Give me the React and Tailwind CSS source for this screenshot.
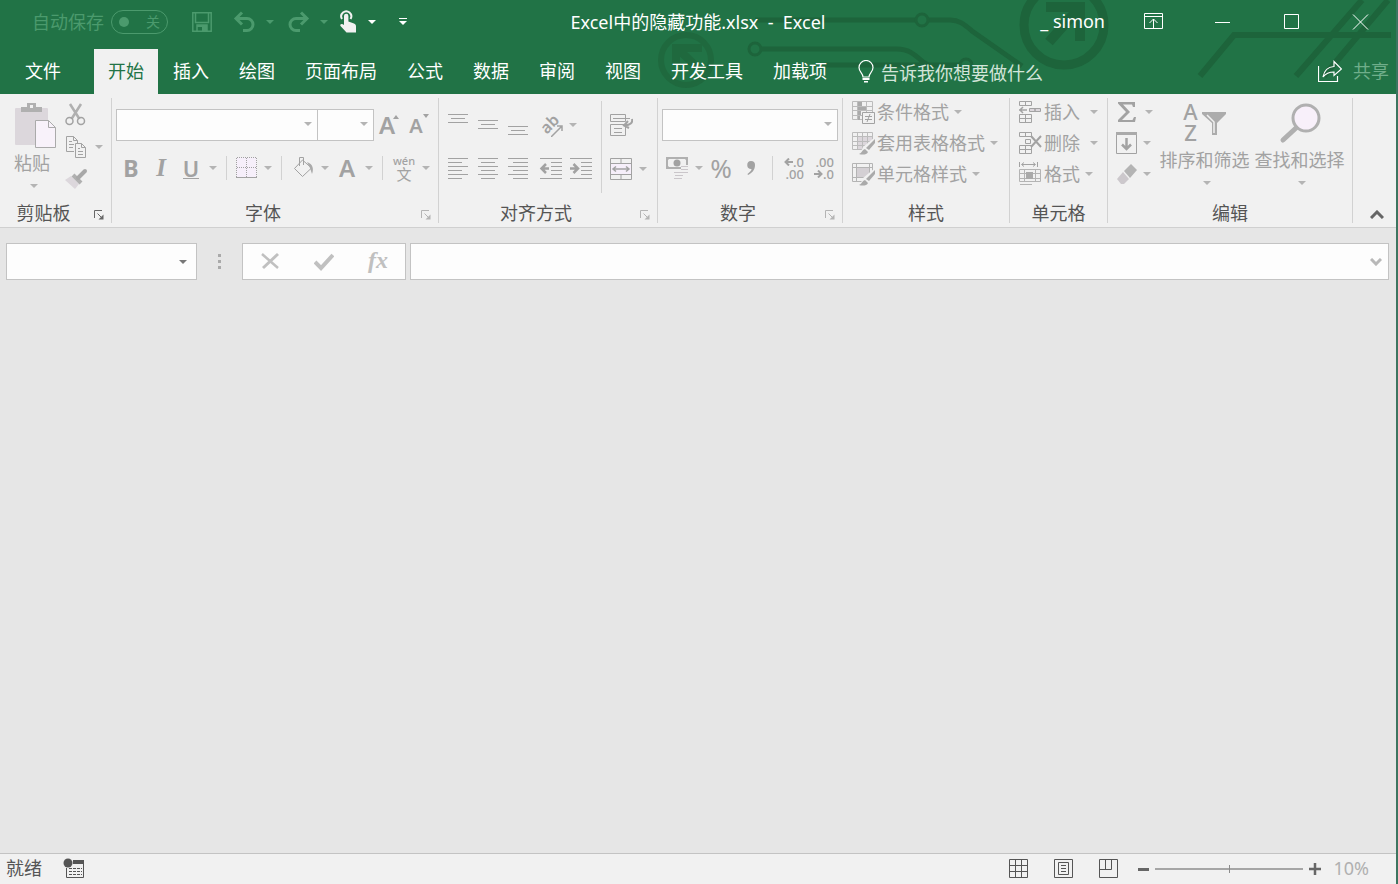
import { useState } from "react";

const tabs = ["开始", "插入", "绘图", "页面布局", "公式", "数据", "审阅", "视图", "开发工具", "加载项"];

const Caret = ({ className = "text-[#b4b4b4]" }) => (
  <svg width="8" height="4" viewBox="0 0 8 4" className={className} aria-hidden="true">
    <path d="M0 0h8L4 4z" fill="currentColor" />
  </svg>
);

const Drop = ({ label }) => (
  <button aria-label={label} className="flex h-7 w-[14px] items-center justify-center">
    <Caret />
  </button>
);

const Tool = ({ label, children }) => (
  <button aria-label={label} className="flex h-7 w-[30px] items-center justify-center">
    {children}
  </button>
);

const Sep = () => <div className="mx-[6px] h-6 w-px bg-[#d2d2d2]" />;

// line icon used all over the ribbon, 24x24 or 20x20
const Icon = ({ children, size = 24 }) => (
  <svg
    width={size}
    height={size}
    viewBox={size === 24 ? "0 0 24 24" : "0 0 20 20"}
    fill="none"
    stroke="currentColor"
    strokeWidth="1"
    aria-hidden="true"
    className="shrink-0"
  >
    {children}
  </svg>
);

const Group = ({ title, launcher, dark, className, children }) => (
  <section aria-label={title} className={`flex shrink-0 flex-col border-r border-[#d2d2d2] ${className}`}>
    <div className="flex flex-1">{children}</div>
    <div className="flex h-5 items-center text-[#555]">
      <span className="flex-1 text-center leading-5">{title}</span>
      {launcher && (
        <button
          aria-label={`${title}设置`}
          className={`flex w-6 justify-center pt-1 ${dark ? "text-[#666]" : "text-[#b4b4b4]"}`}
        >
          <svg width="10" height="10" viewBox="0 0 10 10" fill="none" stroke="currentColor">
            <path d="M.5 8V.5H8M3.500 3.500l4 4" />
            <path d="M9.500 4.500v5h-5z" fill="currentColor" stroke="none" />
          </svg>
        </button>
      )}
    </div>
  </section>
);

const Lines = ({ rows }) => (
  <svg width="20" height="24" viewBox="0 0 20 24" stroke="#a2a2a2" aria-hidden="true">
    {rows.map(([x1, x2, y]) => (
      <path key={y} d={`M${x1} ${y}.5H${x2}`} />
    ))}
  </svg>
);

const Combo = ({ label, className }) => (
  <div className={`relative h-8 ${className}`}>
    <select aria-label={label} className="h-full w-full appearance-none border border-[#c3c3c3] bg-[#fdfdfd] px-2 outline-none" />
    <span className="pointer-events-none absolute top-[13px] right-[6px] flex">
      <Caret />
    </span>
  </div>
);

const Circuit = () => (
  <svg
    width="756"
    height="94"
    viewBox="640 0 756 94"
    fill="none"
    stroke="#1d643b"
    strokeWidth="6"
    className="pointer-events-none absolute top-0 right-0"
    aria-hidden="true"
  >
    <circle cx="686" cy="60" r="25" stroke="#1f693e" />
    <path d="M676 64V48h26M680 51l17 16" stroke="#1f693e" strokeWidth="8" />
    <path d="M755 20h161M928 20h22c10 0 15 5 22 11l50 35" strokeWidth="5" />
    <circle cx="922" cy="20" r="6" strokeWidth="3" />
    <circle cx="755" cy="49" r="6" strokeWidth="3" />
    <path d="M761 49h136c12 0 18 6 26 13l10 6M820 65h140" strokeWidth="5" />
    <circle cx="966" cy="65" r="6" strokeWidth="3" />
    <circle cx="1064" cy="25" r="40" strokeWidth="9" />
    <path d="M1046 7h34v34M1079 8l-30 34" strokeWidth="10" />
    <path d="M1200 76l34-41h157M1296 76L1362 0M1324 76L1388 0" />
  </svg>
);

const TitleBar = () => (
  <div className="relative grid h-11 grid-cols-[1fr_auto_1fr] items-center">
    <div className="flex items-center pl-8 text-[#4b9a6d]">
      <label htmlFor="autosave">自动保存</label>
      <button
        id="autosave"
        role="switch"
        aria-checked="false"
        className="ml-[7px] flex h-6 w-[57px] items-center justify-between rounded-full border border-current px-[7px] text-sm"
      >
        <span className="h-[10px] w-[10px] rounded-full bg-current" />
        关
      </button>
      <button aria-label="保存" className="ml-6">
        <Icon size={20}>
          <path d="M.8 .8h18.400v18.400H.8z" strokeWidth="1.500" />
          <path d="M3.500 1v9.500h13V1M5 19v-6h10v6" strokeWidth="1.500" />
          <path d="M5 13h10v2H5zM10 15h5v4h-5z" fill="currentColor" stroke="none" />
        </Icon>
      </button>
      <button aria-label="撤消" className="ml-[21px]">
        <Icon>
          <path d="M3 8.500h11a5.500 5.500 0 0 1 0 12h-4M9 2.500L3 8.500l6 6" strokeWidth="3" />
        </Icon>
      </button>
      <button aria-label="撤消列表" className="ml-[9px]">
        <Caret className="text-[#4b9a6d]" />
      </button>
      <button aria-label="恢复" className="ml-3">
        <Icon>
          <path d="M21 8.500H10a5.500 5.500 0 0 0 0 12h4M15 2.500l6 6-6 6" strokeWidth="3" />
        </Icon>
      </button>
      <button aria-label="恢复列表" className="ml-[10px]">
        <Caret className="text-[#4b9a6d]" />
      </button>
      <button aria-label="触摸模式" className="ml-[9px] text-[#f1f1f1]">
        <Icon>
          <path d="M5 9a5 5 0 1 1 8.500 0" strokeWidth="2" />
          <path
            d="M7 6a2.200 2.200 0 0 1 4.400 0v5.500l5.600 2c2 .7 2 2 2 3.500v5.500H9.500l-6-6.500c-1-2 1.500-3 3.500-1z"
            fill="currentColor"
            stroke="none"
          />
        </Icon>
      </button>
      <button aria-label="触摸模式列表" className="ml-[7px]">
        <Caret className="text-white" />
      </button>
      <button aria-label="自定义快速访问工具栏" className="ml-[23px] text-white">
        <svg width="8" height="8" viewBox="0 0 8 8" fill="currentColor">
          <path d="M0 0h8v1H0zM0 3h8L4 7z" />
        </svg>
      </button>
    </div>
    <h1 className="whitespace-pre text-white">Excel中的隐藏功能.xlsx  -  Excel</h1>
    <div className="flex items-center justify-end pr-px pb-[3px] text-white">
      <span className="mr-[14px]">_ simon</span>
      <button aria-label="功能区显示选项" className="flex w-[69px] justify-center">
        <Icon size={20}>
          <path d="M.5 2.500h18v15H.5zM.5 5.500h18M9.500 17V8M5.500 12l4-4 4 4" />
        </Icon>
      </button>
      <button aria-label="最小化" className="flex w-[69px] justify-center">
        <Icon size={20}>
          <path d="M2 11.500h15" />
        </Icon>
      </button>
      <button aria-label="最大化" className="flex w-[69px] justify-center">
        <Icon size={20}>
          <path d="M2.500 3.500h14v14h-14z" />
        </Icon>
      </button>
      <button aria-label="关闭" className="flex w-[69px] justify-center">
        <Icon size={20}>
          <path d="M2 3.500l15 15M17 3.500l-15 15" />
        </Icon>
      </button>
    </div>
  </div>
);

const TabBar = ({ active, setActive }) => (
  <nav className="relative mt-[5px] flex h-[45px] items-stretch text-white">
    <button className="mr-2 w-[86px] pb-0.5">文件</button>
    {tabs.map((tab) => (
      <button
        key={tab}
        onClick={() => setActive(tab)}
        className={tab === active ? "bg-[#f1f1f1] px-[14px] pb-0.5 text-[#217346]" : "px-[15px] pb-0.5"}
      >
        {tab}
      </button>
    ))}
    <label className="ml-4 flex flex-1 items-center">
      <svg width="16" height="24" viewBox="0 0 16 24" fill="none" stroke="currentColor" aria-hidden="true">
        <path d="M5 17c0-4-4-5-4-9.500a7 7 0 0 1 14 0C15 12 11 13 11 17z" strokeWidth="1.200" />
        <path d="M4.500 18h7v2h-7zM6 21h4v1.500H6z" fill="currentColor" stroke="none" />
      </svg>
      <input
        aria-label="告诉我你想要做什么"
        placeholder="告诉我你想要做什么"
        className="ml-[7px] w-48 bg-transparent pt-0.5 outline-none placeholder:text-[#d3e5da]"
      />
    </label>
    <button className="flex items-center gap-[11px] pr-[7px] pb-0.5 text-[#6fae8a]">
      <span className="text-white">
        <Icon>
          <path d="M.5 7v15.500h19V17" strokeWidth="1.200" />
          <path d="M5 18c1-6 4-10 11-10.500V2.500l7.500 7.500-7.500 6.500V13c-5 0-8 1-11 5z" strokeWidth="1.200" />
        </Icon>
      </span>
      共享
    </button>
  </nav>
);

const Clipboard = () => (
  <Group title="剪贴板" launcher dark className="w-28">
    <button className="ml-3 flex w-[44px] flex-col items-center pt-1">
      <svg width="44" height="46" viewBox="0 0 44 46" aria-hidden="true">
        <rect x="3" y="6" width="33" height="37" rx="1" fill="#dcd7dc" />
        <path d="M9 5h6V1h9v4h6v5H9zM18 3v3h3V3z" fill="#b0b0b0" fillRule="evenodd" />
        <path d="M23.500 18.500h13l7 7v20h-20z" fill="#f8f2fa" stroke="#aaa" />
        <path d="M36.500 18.500v7h7" fill="none" stroke="#aaa" />
      </svg>
      <span className="-ml-1 leading-[30px]">粘贴</span>
      <span className="flex pt-[6px]">
        <Caret />
      </span>
    </button>
    <div className="ml-2 flex flex-col gap-2 pt-[5px]">
      <button aria-label="剪切">
        <Icon>
          <path d="M6 1l9.500 15M17 1L7.500 16" stroke="#b0b0b0" strokeWidth="2.500" />
          <circle cx="5.500" cy="18" r="3.500" strokeWidth="1.500" />
          <circle cx="17" cy="18" r="3.500" strokeWidth="1.500" />
        </Icon>
      </button>
      <div className="flex h-6 items-center">
        <button aria-label="复制">
          <Icon>
            <path d="M10 16.500H2.500v-15h7l4 4V8" />
            <path d="M9.500 1.500v4h4M5 6.500h3M5 9.500h5M5 12.500h4" />
            <path d="M11.500 8.500h6l4 4v10h-10z" />
            <path d="M17.500 8.500v4h4M14 13.500h2M14 16.500h5M14 19.500h5" />
          </Icon>
        </button>
        <span className="ml-1">
          <Drop label="复制选项" />
        </span>
      </div>
      <button aria-label="格式刷">
        <Icon>
          <path d="M1 13l6-4 8 8-4 5z" fill="#dcd7dc" stroke="none" />
          <path d="M9 8l8 8" stroke="#b0b0b0" strokeWidth="4" />
          <path d="M14 11l7-7" stroke="#a8a8a8" strokeWidth="4" strokeLinecap="round" />
        </Icon>
      </button>
    </div>
  </Group>
);

const FontGroup = () => (
  <Group title="字体" launcher className="w-[327px]">
    <div className="pt-[11px] pl-1">
      <div className="flex items-center">
        <Combo label="字体" className="w-[202px]" />
        <Combo label="字号" className="-ml-px w-[57px]" />
        <Tool label="增大字号">
          <span className="flex">
            <span className="text-[24px] leading-7 font-semibold">A</span>
            <svg width="6" height="4" viewBox="0 0 6 4" className="-ml-0.5 mt-1">
              <path d="M0 4h6L3 0z" fill="currentColor" />
            </svg>
          </span>
        </Tool>
        <Tool label="减小字号">
          <span className="flex">
            <span className="pt-0.5 text-[20px] leading-7 font-semibold">A</span>
            <svg width="6" height="4" viewBox="0 0 6 4" className="mt-1">
              <path d="M0 0h6L3 4z" fill="currentColor" />
            </svg>
          </span>
        </Tool>
      </div>
      <div className="mt-[13px] flex items-center">
        <Tool label="加粗">
          <b className="text-[23px] leading-7 font-bold">B</b>
        </Tool>
        <Tool label="倾斜">
          <i className="font-['Liberation_Serif'] text-[25px] leading-7 font-bold">I</i>
        </Tool>
        <Tool label="下划线">
          <span className="border-b border-current text-[22px] leading-5 font-semibold">U</span>
        </Tool>
        <Drop label="下划线选项" />
        <Sep />
        <button aria-label="边框" className="flex h-7 w-7 items-center justify-center">
          <Icon>
            <path d="M1.500 1.500h20v20h-20z" fill="#f6effa" stroke="none" />
            <path d="M1.500 21V1.500h20V21M11.500 2v19M2 11.500h19" strokeDasharray="1 1" />
            <path d="M1 21.500h21" />
          </Icon>
        </button>
        <Drop label="边框选项" />
        <Sep />
        <Tool label="填充颜色">
          <Icon>
            <path d="M3.500 12.500L11.500 4l9 8-9 8.500zM8.500 10V1.500h4V9" />
            <path d="M16 6c6 2 7 7 5 12l-2-6z" fill="#aaa" stroke="none" />
          </Icon>
        </Tool>
        <Drop label="填充颜色选项" />
        <Tool label="字体颜色">
          <span className="text-[24px] leading-7 font-semibold">A</span>
        </Tool>
        <Drop label="字体颜色选项" />
        <Sep />
        <Tool label="拼音">
          <span className="flex flex-col items-center">
            <span className="text-[11px] leading-3 font-medium">wén</span>
            <span className="text-[15px] leading-[14px]">文</span>
          </span>
        </Tool>
        <Drop label="拼音选项" />
      </div>
    </div>
  </Group>
);

const AlignGroup = () => (
  <Group title="对齐方式" launcher className="w-[219px]">
    <div className="w-[162px] pt-[13px] pl-1">
      <div className="flex items-center">
        <Tool label="顶端对齐"><Lines rows={[[0, 20, 1], [3, 17, 5], [0, 20, 9]]} /></Tool>
        <Tool label="垂直居中"><Lines rows={[[0, 20, 7], [3, 17, 11], [0, 20, 15]]} /></Tool>
        <Tool label="底端对齐"><Lines rows={[[0, 20, 13], [3, 17, 17], [0, 20, 21]]} /></Tool>
        <span className="ml-[3px]">
          <Tool label="方向">
            <span className="relative flex h-6 w-6 items-center justify-center">
              <span className="-rotate-45 pb-1 text-[16px] leading-5 font-semibold">ab</span>
              <svg width="12" height="12" viewBox="0 0 12 12" className="absolute right-0 bottom-0" fill="none" stroke="currentColor" strokeWidth="1.500">
                <path d="M0 12L11 1M11 6V1H6" />
              </svg>
            </span>
          </Tool>
        </span>
        <Drop label="方向选项" />
      </div>
      <div className="mt-4 flex items-center">
        <Tool label="左对齐"><Lines rows={[[0, 20, 1], [0, 14, 5], [0, 20, 9], [0, 14, 13], [0, 20, 17], [0, 14, 21]]} /></Tool>
        <Tool label="居中"><Lines rows={[[0, 20, 1], [3, 17, 5], [0, 20, 9], [3, 17, 13], [0, 20, 17], [3, 17, 21]]} /></Tool>
        <Tool label="右对齐"><Lines rows={[[0, 20, 1], [5, 20, 5], [0, 20, 9], [5, 20, 13], [0, 20, 17], [5, 20, 21]]} /></Tool>
        <span className="ml-[3px] flex">
          <Tool label="减少缩进量">
            <Icon>
              <path d="M1 1.500h22M12 5.500h11M12 9.500h11M12 13.500h11M12 17.500h11M1 21.500h22" />
              <path d="M10 11.500H3M7 7l-4.500 4.500L7 16" strokeWidth="2.500" />
            </Icon>
          </Tool>
          <Tool label="增加缩进量">
            <Icon>
              <path d="M1 1.500h22M12 5.500h11M12 9.500h11M12 13.500h11M12 17.500h11M1 21.500h22" />
              <path d="M1 11.500h7M4.500 7L9 11.500 4.500 16" strokeWidth="2.500" />
            </Icon>
          </Tool>
        </span>
      </div>
    </div>
    <div className="mt-[3px] h-[92px] w-px bg-[#d2d2d2]" />
    <div className="pt-[13px] pl-1">
      <Tool label="自动换行">
        <Icon>
          <path d="M1.500 1.500h15v7h-15zM1.500 11.500h15v11h-15zM4 5.500h17M5 15.500h8M5 19.500h8" />
          <path d="M23 6c1 4-2 6-7 6.500M19 8l-4 4.500 5 2.500" strokeWidth="2" />
        </Icon>
      </Tool>
      <div className="mt-4 flex items-center">
        <Tool label="合并后居中">
          <Icon>
            <path d="M2 7h20v10H2z" fill="#f6effa" stroke="none" />
            <path d="M1.500 1.500h21v21h-21zM1.500 6.500h21M1.500 17.500h21M12 1.500v5M12 17.500v5" />
            <path d="M4 12h16M7 9.500L4 12l3 2.500M17 9.500l3 2.500-3 2.500" strokeWidth="1.500" />
          </Icon>
        </Tool>
        <Drop label="合并选项" />
      </div>
    </div>
  </Group>
);

const NumberGroup = () => (
  <Group title="数字" launcher className="w-[185px]">
    <div className="pt-[11px] pl-1">
      <Combo label="数字格式" className="w-[176px]" />
      <div className="mt-[13px] flex items-center">
        <Tool label="会计数字格式">
          <Icon>
            <path d="M1 1h22v12H1zM4 3a2 2 0 0 1-1 1v6a2 2 0 0 1 1 1h16a2 2 0 0 1 1-1V4a2 2 0 0 1-1-1z" fill="#b0b0b0" fillRule="evenodd" stroke="none" />
            <circle cx="12" cy="7" r="3.500" fill="currentColor" stroke="none" />
            <path d="M16 9h8v8h-8zM9 15h9v8H9z" fill="#f1f1f1" stroke="none" />
            <path d="M16 10.500h7M16 13.500h7M16 16.500h7M9 16.500h8M10 19.500h8M9 22.500h8" stroke="#cac6ca" />
          </Icon>
        </Tool>
        <Drop label="会计数字格式选项" />
        <Tool label="百分比样式"><span className="text-[26px] leading-7">%</span></Tool>
        <Tool label="千位分隔样式">
          <svg width="10" height="16" viewBox="0 0 10 16" fill="currentColor">
            <path d="M5 1a4 4 0 0 1 4 4c0 5-3 8-7 10l-.5-1C4 12 5.500 10.500 5.500 9A4 4 0 1 1 5 1z" />
          </svg>
        </Tool>
        <Sep />
        <Tool label="增加小数位数">
          <span className="flex flex-col items-end text-[13px] leading-3 font-medium">
            <span className="flex items-center">
              <svg width="9" height="8" viewBox="0 0 9 8" fill="none" stroke="currentColor" strokeWidth="2"><path d="M9 4H2M5 .5L1.500 4 5 7.500" /></svg>
              .0
            </span>
            <span>.00</span>
          </span>
        </Tool>
        <Tool label="减少小数位数">
          <span className="flex flex-col items-end text-[13px] leading-3 font-medium">
            <span>.00</span>
            <span className="flex items-center">
              <svg width="9" height="8" viewBox="0 0 9 8" fill="none" stroke="currentColor" strokeWidth="2"><path d="M0 4h7M4 .5L7.500 4 4 7.500" /></svg>
              .0
            </span>
          </span>
        </Tool>
      </div>
    </div>
  </Group>
);

const MenuRow = ({ label, icon, children }) => (
  <button className="flex h-[31px] items-center">
    <Icon>{icon}</Icon>
    <span className="ml-[2px]">{label}</span>
    {children || (
      <span className="ml-[5px]">
        <Caret />
      </span>
    )}
  </button>
);

const Brush = () => (
  <>
    <path d="M12 16l12-10v17H9z" fill="#f1f1f1" stroke="none" />
    <path d="M8 23c3-1 3-4 6-5l3 3c-1 3-6 3-9 2z" fill="#aaa" stroke="none" />
    <path d="M15 17l9-9v4l-6 7z" fill="#aaa" stroke="none" />
  </>
);

const StyleGroup = () => (
  <Group title="样式" className="w-[167px]">
    <div className="-mt-0.5 pl-2">
      <MenuRow
        label="条件格式"
        icon={
          <>
            <path d="M1.500 1.500h20v18h-20zM1.500 6.500h20M1.500 10.500h20M1.500 15.500h20M6.500 1.500v18M15.500 1.500v18" stroke="#bcbcbc" />
            <path d="M7 2h4v4H7zM7 7h8v3H7zM7 11h3v4H7zM7 16h2v4H7z" fill="#aaa" stroke="none" />
            <path d="M11.500 12.500h12v11h-12z" fill="#f1f1f1" />
            <path d="M14 16.500h7M14 19.500h7M19 14l-3 8" />
          </>
        }
      />
      <MenuRow
        label="套用表格格式"
        icon={
          <>
            <path d="M7 6h14v13H7z" fill="#dcd7dc" stroke="none" />
            <path d="M1.500 1.500h20v17h-20zM1.500 5.500h20M1.500 10.500h20M1.500 14.500h20M6.500 1.500v17M11.500 1.500v17M16.500 1.500v17" stroke="#bcbcbc" />
            <Brush />
          </>
        }
      />
      <MenuRow
        label="单元格样式"
        icon={
          <>
            <path d="M5 6h13v10H5z" fill="#d4d0d4" stroke="none" />
            <path d="M1.500 1.500h20v18h-20zM1.500 5.500h20M1.500 15.500h20M5.500 1.500v18M18.500 1.500v18" stroke="#b4b4b4" />
            <Brush />
          </>
        }
      />
    </div>
  </Group>
);

const CellGroup = () => (
  <Group title="单元格" className="w-[98px]">
    <div className="-mt-0.5 pl-2">
      <MenuRow
        label="插入"
        icon={
          <>
            <path d="M1.500 1.500h12v4h-12zM7.500 1.500v4M1.500 14.500h12v8h-12zM1.500 18.500h12M7.500 14.500v8" />
            <path d="M11.500 8.500h11v3h-11z" fill="#dcd7dc" />
            <path d="M17 8v4M1 10h8M5 7l-3 3 3 3" strokeWidth="1.500" />
          </>
        }
      >
        <span className="ml-[10px]"><Caret /></span>
      </MenuRow>
      <MenuRow
        label="删除"
        icon={
          <>
            <path d="M1.500 1.500h12v4h-12zM7.500 1.500v4M1.500 14.500h12v8h-12zM1.500 18.500h12M7.500 14.500v8M7.500 8.500h5v4h-5z" />
            <path d="M13 5l10 11M23 5L13 16" strokeWidth="2" />
          </>
        }
      >
        <span className="ml-[10px]"><Caret /></span>
      </MenuRow>
      <MenuRow
        label="格式"
        icon={
          <>
            <path d="M1.500 0v5M19.500 0v5M4 2.500h13M6 .5l-2.500 2L6 4.500M15 .5l2.500 2-2.500 2" />
            <path d="M1.500 7.500h21v12h-21zM1.500 11.500h21M1.500 16.500h21M6.500 7.500v12M17.500 7.500v12M2 22.500h12" stroke="#b4b4b4" />
            <path d="M8 10h7v7H8z" fill="#aaa" stroke="none" />
          </>
        }
      />
    </div>
  </Group>
);

const EditGroup = () => (
  <Group title="编辑" className="w-[245px]">
    <div className="-mt-0.5 pl-[6px]">
      <button aria-label="自动求和" className="flex h-[31px] items-center gap-[7px]">
        <Icon>
          <path d="M4 2h17v5h-2l-1-2.500H9l7 7.500-8 8h10.500l1.500-3h2L21 22H4v-2l8-8-8-8.500z" fill="currentColor" stroke="none" />
        </Icon>
        <Caret />
      </button>
      <button aria-label="填充" className="flex h-[31px] items-center gap-[5px]">
        <Icon>
          <path d="M2.500 3v19.500h20V3" />
          <path d="M2 1h21v3H2z" fill="#aaa" stroke="none" />
          <path d="M12.500 7v11M8 13.500l4.500 4.500 4.500-4.500" strokeWidth="2.500" />
        </Icon>
        <Caret />
      </button>
      <button aria-label="清除" className="flex h-[31px] items-center gap-[5px]">
        <Icon>
          <path d="M10 9l7-7 6 6-7 8z" fill="#b4b4b4" stroke="none" />
          <path d="M9 10l6 7-5 5H7l-4-5z" fill="#ccc8cc" stroke="none" />
        </Icon>
        <Caret />
      </button>
    </div>
    <button className="ml-1 flex w-[95px] flex-col items-center pt-[3px]">
      <span className="flex h-11 w-[44px]" aria-hidden="true">
        <span className="flex w-4 flex-col items-center text-[22px] leading-[21px] font-medium">
          <span>A</span>
          <span>Z</span>
        </span>
        <svg width="26" height="44" viewBox="0 0 26 44" fill="#acacac" className="ml-0.5">
          <path d="M1 11h24v2l-9 9v12h-5V22L1 13z" />
          <path d="M6 14l7 7v11" fill="none" stroke="#f1f1f1" strokeWidth="1.500" />
        </svg>
      </span>
      <span className="leading-[30px]">排序和筛选</span>
      <span className="flex pt-[6px] pl-1"><Caret /></span>
    </button>
    <button className="flex w-[95px] flex-col items-center pt-[3px]">
      <svg width="44" height="44" viewBox="0 0 44 44" aria-hidden="true" fill="none" stroke="#b0b0b0">
        <circle cx="28" cy="17" r="13" fill="#f8f0fa" strokeWidth="3" />
        <path d="M18 27L5 39" strokeWidth="5" strokeLinecap="round" />
      </svg>
      <span className="leading-[30px]">查找和选择</span>
      <span className="flex pt-[6px] pl-1"><Caret /></span>
    </button>
  </Group>
);

const FormulaBar = () => (
  <div className="flex h-[52px] items-end pr-[7px] pl-[6px]">
    <div className="relative h-[37px] w-[191px]">
      <input aria-label="名称框" className="h-full w-full border border-[#c3c3c3] bg-[#fdfdfd] px-2 outline-none" />
      <button aria-label="名称列表" className="absolute top-0 right-[10px] flex h-full items-center">
        <Caret className="text-[#777]" />
      </button>
    </div>
    <div className="flex h-[37px] w-[45px] flex-col items-center justify-center gap-[3px]">
      <span className="h-[3px] w-[3px] bg-[#aaa]" />
      <span className="h-[3px] w-[3px] bg-[#aaa]" />
      <span className="h-[3px] w-[3px] bg-[#aaa]" />
    </div>
    <div className="flex h-[37px] w-[164px] items-center justify-around border border-[#c3c3c3] bg-[#fdfdfd] text-[#c0c0c0]">
      <button aria-label="取消">
        <Icon size={20}>
          <path d="M2 2l16 14" strokeWidth="2.500" />
          <path d="M18 2L3 16" strokeWidth="3" />
        </Icon>
      </button>
      <button aria-label="输入">
        <Icon size={20}>
          <path d="M1 10l6 6L19 3" strokeWidth="4" />
        </Icon>
      </button>
      <button aria-label="插入函数" className="pb-1 font-['Liberation_Serif'] text-[24px] leading-7 font-bold italic">
        fx
      </button>
    </div>
    <div className="relative ml-1 h-[37px] flex-1">
      <input aria-label="编辑栏" className="h-full w-full border border-[#c3c3c3] bg-[#fdfdfd] px-2 outline-none" />
      <button aria-label="展开编辑栏" className="absolute top-0 right-[7px] flex h-full items-center text-[#b8b8b8]">
        <svg width="12" height="8" viewBox="0 0 12 8" fill="none" stroke="currentColor" strokeWidth="3">
          <path d="M1 1l5 5 5-5" />
        </svg>
      </button>
    </div>
  </div>
);

const StatusBar = () => (
  <footer className="flex h-[31px] items-center border-t border-[#c3c3c3] bg-[#f1f1f1] pr-[27px] pl-[6px] text-[#555]">
    <span className="pb-0.5">就绪</span>
    <button aria-label="宏录制" className="ml-[21px]">
      <Icon>
        <path d="M3.500 11v9.500h17V4" />
        <path d="M10 3h11v4H10z" fill="currentColor" stroke="none" />
        <circle cx="5" cy="6" r="4.500" fill="currentColor" stroke="none" />
        <path d="M6 11.500h13M6 14.500h13M6 17.500h13" strokeDasharray="3 1" />
      </Icon>
    </button>
    <div className="ml-auto flex items-center">
      <div className="mr-[19px] flex gap-[25px]">
        <button aria-label="普通">
          <Icon size={20}>
            <path d="M.5 .5h18v18H.5zM6.500 .5v18M12.500 .5v18M.5 6.500h18M.5 12.500h18" />
          </Icon>
        </button>
        <button aria-label="页面布局">
          <Icon size={20}>
            <path d="M.5 .5h18v18H.5zM4.500 3.500h10v12h-10zM7 6.500h5M7 9.500h5M7 12.500h5" />
          </Icon>
        </button>
        <button aria-label="分页预览">
          <Icon size={20}>
            <path d="M.5 .5h18v18H.5zM.5 10.500h12V.5M6.500 .5v10" />
          </Icon>
        </button>
      </div>
      <button aria-label="缩小" className="flex h-5 w-[11px] items-center">
        <span className="h-[3px] w-full bg-[#666]" />
      </button>
      <div className="relative mx-[6px] flex h-5 w-[148px] items-center">
        <span className="absolute left-1/2 h-2 w-px bg-[#8c8c8c]" />
        <input
          type="range"
          min="10"
          max="400"
          defaultValue="10"
          aria-label="缩放"
          className="h-[2px] w-full appearance-none bg-[#a6a6a6] [&::-webkit-slider-thumb]:appearance-none"
        />
      </div>
      <button aria-label="放大">
        <svg width="12" height="12" viewBox="0 0 12 12" stroke="#666" strokeWidth="2.500">
          <path d="M6 0v12M0 6h12" />
        </svg>
      </button>
      <span className="ml-3 pb-0.5 text-[#b0b0b0]">10%</span>
    </div>
  </footer>
);

const App = () => {
  const [active, setActive] = useState("开始");

  return (
    <div className="flex h-screen flex-col border-r-2 border-[#3d7560] bg-[#e6e6e6] font-['Noto_Sans','Noto_Sans_CJK_SC',sans-serif] text-[18px] leading-6">
      <header className="relative bg-[#217346]">
        <Circuit />
        <TitleBar />
        <TabBar active={active} setActive={setActive} />
      </header>
      <div className="flex h-[134px] border-b border-[#d0d0d0] bg-[#f1f1f1] py-1 text-[#a2a2a2]">
        <Clipboard />
        <FontGroup />
        <AlignGroup />
        <NumberGroup />
        <StyleGroup />
        <CellGroup />
        <EditGroup />
        <div className="flex flex-1 items-end justify-end pr-3 pb-1">
          <button aria-label="折叠功能区" className="text-[#666]">
            <svg width="14" height="9" viewBox="0 0 14 9" fill="none" stroke="currentColor" strokeWidth="3">
              <path d="M1 8l6-6 6 6" />
            </svg>
          </button>
        </div>
      </div>
      <FormulaBar />
      <main className="flex-1" />
      <StatusBar />
    </div>
  );
};

export default App;
